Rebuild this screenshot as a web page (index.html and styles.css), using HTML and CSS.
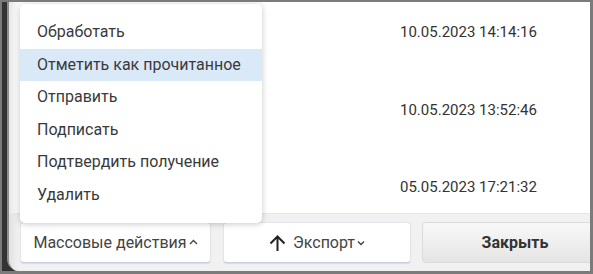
FILE: index.html
```html
<!DOCTYPE html>
<html lang="ru">
<head>
<meta charset="utf-8">
<link rel="stylesheet" href="styles.css">
</head>
<body>
<div class="frame">
  <div class="dialog">
    <div class="content">
      <div class="row">10.05.2023 14:14:16</div>
      <div class="row">10.05.2023 13:52:46</div>
      <div class="row">05.05.2023 17:21:32</div>
    </div>
    <div class="footer">
      <button class="btn btn-mass">Массовые действия<svg class="chev" width="9" height="6" viewBox="0 0 9 6"><polyline points="1,5 4.5,1.5 8,5" fill="none" stroke="#444" stroke-width="1.4"/></svg></button>
      <button class="btn btn-export"><svg class="arrow" width="17" height="18" viewBox="0 0 17 18"><path d="M8.5 17V2.5M1.5 9.5L8.5 2.5L15.5 9.5" fill="none" stroke="#222" stroke-width="2"/></svg>Экспорт<svg class="chev" width="8" height="6" viewBox="0 0 8 6"><polyline points="1,1.5 4,4.5 7,1.5" fill="none" stroke="#444" stroke-width="1.4"/></svg></button>
      <button class="btn btn-close">Закрыть</button>
    </div>
    <ul class="menu">
      <li class="item">Обработать</li>
      <li class="item active">Отметить как прочитанное</li>
      <li class="item">Отправить</li>
      <li class="item">Подписать</li>
      <li class="item">Подтвердить получение</li>
      <li class="item">Удалить</li>
    </ul>
  </div>
</div>
</body>
</html>
```
FILE: styles.css
```css
html, body {
  margin: 0;
  padding: 0;
}
body {
  font-family: Roboto, "Liberation Sans", sans-serif;
  font-size: 15px;
  color: #333;
}
.frame {
  width: 593px;
  height: 274px;
  box-sizing: border-box;
  border-style: solid;
  border-color: #7b7b7b;
  border-width: 2px 3px 3px 2px;
  background: #333;
  display: flex;
  overflow: hidden;
}
.dialog {
  position: relative;
  flex: 1;
  margin-left: 5px;
  background: #fff;
  border-left: 2px solid #8e8e8e;
  border-bottom-left-radius: 12px;
  display: flex;
  flex-direction: column;
  overflow: hidden;
  box-shadow: inset 12px 0 10px -8px rgba(0, 0, 0, 0.12);
}
.content {
  flex: 1;
  display: flex;
  flex-direction: column;
  gap: 57.5px;
  padding: 20px 0 0 391px;
}
.row {
  height: 20px;
  line-height: 20px;
  color: #333;
  white-space: nowrap;
}
.footer {
  height: 58px;
  box-sizing: border-box;
  background: #f1f1f1;
  border-top: 1px solid #e9e9e9;
  display: flex;
  gap: 11px;
  padding: 8px 0 0 11px;
  box-shadow: inset 10px 0 8px -6px rgba(0, 0, 0, 0.08);
}
.btn {
  flex: none;
  height: 41px;
  box-sizing: border-box;
  border-radius: 4px;
  font-family: Roboto, "Liberation Sans", sans-serif;
  font-size: 16px;
  color: #444;
  display: flex;
  align-items: center;
  justify-content: center;
  padding: 0;
  background: #fff;
  border: 1px solid #e4e4ea;
  border-bottom-color: #c9cde2;
  box-shadow: 0 1px 1px rgba(90, 100, 170, 0.15);
}
.btn-mass {
  width: 191px;
}
.btn-mass .chev {
  margin-left: 2px;
  margin-top: -2px;
}
.btn-export {
  width: 188px;
  margin-left: 1px;
}
.btn-export .arrow {
  margin-right: 7px;
}
.btn-export .chev {
  margin-left: 2px;
}
.btn-close {
  width: 186px;
  font-weight: bold;
  color: #333;
  background: linear-gradient(#f8f8f8, #e5e5e5);
  border: 1px solid #dadada;
  box-shadow: none;
}
.menu {
  position: absolute;
  left: 11px;
  top: 2px;
  width: 242px;
  height: 219px;
  box-sizing: border-box;
  margin: 0;
  padding: 12px 0 0;
  list-style: none;
  background: #fff;
  border-radius: 5px;
  box-shadow: 0 1px 6px rgba(0, 0, 0, 0.22);
}
.item {
  height: 32.6px;
  line-height: 32.6px;
  padding-left: 17px;
  font-size: 16px;
  color: #3a3a3a;
  white-space: nowrap;
}
.item.active {
  background: #dae9f8;
}
```
